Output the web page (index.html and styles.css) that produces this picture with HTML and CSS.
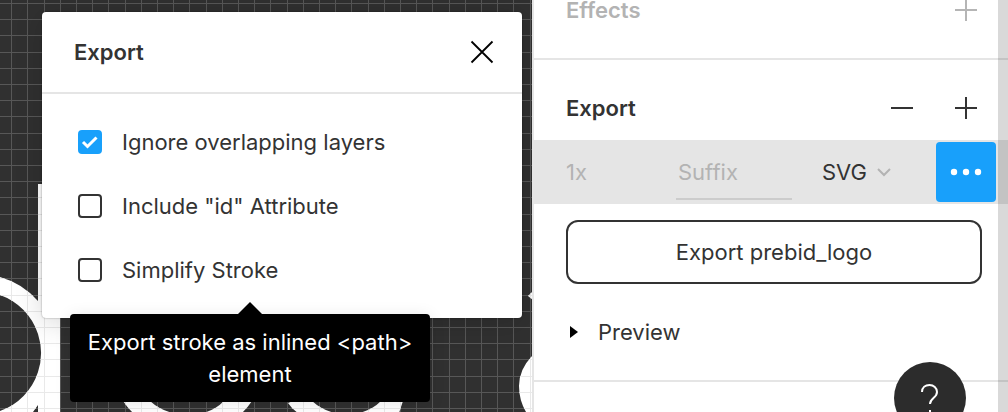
FILE: index.html
```html
<!DOCTYPE html>
<html lang="en">
<head>
<meta charset="utf-8">
<meta name="viewport" content="width=device-width, initial-scale=1">
<title>Export settings</title>
<link rel="stylesheet" href="styles.css">
</head>
<body>
<div class="editor">
  <main class="canvas">
    <svg class="artwork" aria-hidden="true">
      <defs>
        <pattern id="grid" x="11" y="3" width="81" height="81" patternUnits="userSpaceOnUse">
          <path d="M0 0h1v81h-1zM16 0h1v81h-1zM33 0h1v81h-1zM49 0h1v81h-1zM65 0h1v81h-1zM0 0h81v1h-81zM0 16h81v1h-81zM0 32h81v1h-81zM0 49h81v1h-81zM0 65h81v1h-81z" fill="#8c8c8c" fill-opacity=".42"/>
        </pattern>
        <pattern id="grid-light" x="11" y="3" width="81" height="81" patternUnits="userSpaceOnUse">
          <path d="M0 0h1v81h-1zM16 0h1v81h-1zM33 0h1v81h-1zM49 0h1v81h-1zM65 0h1v81h-1zM0 0h81v1h-81zM0 16h81v1h-81zM0 32h81v1h-81zM0 49h81v1h-81zM0 65h81v1h-81z" fill="#e9e9e9"/>
        </pattern>
        <g id="letters">
          <path d="M0 277A78.700 78.700 0 0 1 38 301V334A61.500 61.500 0 0 0 0 295zM0 411A61.500 61.500 0 0 0 38 372V405L33 412H0z"/>
          <path d="M38 184H60V412H38V372A61.500 61.500 0 0 0 38 334z"/>
          <path d="M123 401Q127 407 133 413H173Q160 410 150 401zM224 401Q215 410 203 413H242Q248 407 252 401z"/>
          <path d="M293 401L288 403Q292 409 298 413H335Q322 410 312 401zM381 401Q372 410 359 413H399L403 401z"/>
          <path d="M519 386Q519 369 533 355V412H526Q519 400 519 386zM528 296l5-5v9z"/>
        </g>
      </defs>
      <rect width="100%" height="100%" fill="url(#grid)"/>
      <use href="#letters" fill="#fff"/>
      <use href="#letters" fill="url(#grid-light)"/>
    </svg>
    <section class="dialog" aria-labelledby="dialog-title">
      <header class="dialog-header">
        <h2 id="dialog-title">Export</h2>
        <button class="icon-button" type="button" aria-label="Close">
          <svg width="24" height="24" viewBox="0 0 24 24"><path d="M1.500 1.500l21 21M22.500 1.500l-21 21" stroke="#000" stroke-width="1.800"/></svg>
        </button>
      </header>
      <div class="options">
        <label class="option"><input type="checkbox" checked><span>Ignore overlapping layers</span></label>
        <label class="option"><input type="checkbox"><span>Include "id" Attribute</span></label>
        <label class="option"><input type="checkbox" aria-describedby="stroke-tip"><span>Simplify Stroke</span></label>
      </div>
      <div class="tooltip" id="stroke-tip" role="tooltip">Export stroke as inlined &lt;path&gt; element</div>
    </section>
  </main>
  <aside class="panel">
    <section class="effects">
      <h2>Effects</h2>
      <button class="icon-button" type="button" aria-label="Add effect">
        <svg width="24" height="24" viewBox="0 0 24 24"><path d="M1 12h22M12 1v22" stroke="#b5b5b5" stroke-width="2"/></svg>
      </button>
    </section>
    <section class="export">
      <header class="export-header">
        <h2>Export</h2>
        <button class="icon-button" type="button" aria-label="Remove export">
          <svg width="24" height="24" viewBox="0 0 24 24"><path d="M1 12h22" stroke="#333" stroke-width="2"/></svg>
        </button>
        <button class="icon-button" type="button" aria-label="Add export">
          <svg width="24" height="24" viewBox="0 0 24 24"><path d="M1 12h22M12 1v22" stroke="#333" stroke-width="2"/></svg>
        </button>
      </header>
      <div class="export-row">
        <input class="scale" type="text" value="1x" aria-label="Scale">
        <input class="suffix" type="text" placeholder="Suffix" aria-label="Suffix">
        <div class="format">
          <select aria-label="Format"><option>SVG</option></select>
          <svg class="chevron" width="14" height="9" viewBox="0 0 14 9" aria-hidden="true"><path d="M1 1l6 6 6-6" fill="none" stroke="#b3b3b3" stroke-width="2"/></svg>
        </div>
        <button class="more" type="button" aria-label="Export settings">
          <svg width="32" height="8" viewBox="0 0 32 8"><g fill="#fff"><circle cx="4" cy="4" r="3.200"/><circle cx="16" cy="4" r="3.200"/><circle cx="28" cy="4" r="3.200"/></g></svg>
        </button>
      </div>
      <button class="export-button" type="button">Export prebid_logo</button>
      <button class="preview" type="button">
        <svg width="8" height="12" viewBox="0 0 8 12" aria-hidden="true"><path d="M0 0l8 6-8 6z"/></svg>
        <span>Preview</span>
      </button>
    </section>
    <div class="scrollbar"></div>
  </aside>
  <button class="help" type="button" aria-label="Help">
    <svg width="20" height="34" viewBox="0 0 20 34" fill="none" stroke="#fff" stroke-width="2"><path d="M2 10C2 5.500 5.400 3 9.500 3s7.500 2.700 7.500 7c0 6-7 6-7 12M10 28v3"/></svg>
  </button>
</div>
</body>
</html>
```
FILE: styles.css
```css
* { box-sizing: border-box; }
body {
  margin: 0;
  overflow: hidden;
  color: #333;
  font: 22px/32px Inter, "Liberation Sans", sans-serif;
}
h2 { margin: 0; font-size: 22px; font-weight: 600; line-height: 32px; }
button, input, select { margin: 0; padding: 0; border: 0; background: none; color: inherit; font: inherit; }
svg { display: block; }

.editor { position: relative; display: flex; height: 100vh; overflow: hidden; }
.canvas { position: relative; flex: 1; min-width: 0; padding: 12px 10px 0 42px; background: #303030; }
.artwork { position: absolute; inset: 0; width: 100%; height: 100%; }
.icon-button { display: grid; place-items: center; width: 24px; height: 32px; }

.dialog { position: relative; border-radius: 4px; background: #fff; box-shadow: 0 4px 28px rgba(0, 0, 0, .16), 0 0 2px rgba(0, 0, 0, .4); }
.dialog-header { display: flex; align-items: center; justify-content: space-between; padding: 24px 28px 24px 32px; border-bottom: 2px solid #e5e5e5; }
.options { display: flex; flex-direction: column; gap: 32px; padding: 32px 36px; }
.option { display: flex; align-items: center; gap: 20px; }
.option input { appearance: none; width: 24px; height: 24px; border: 2px solid #333; border-radius: 4px; }
.option input:checked { border-color: #18a0fb; background: #18a0fb url("data:image/svg+xml,%3Csvg xmlns='http://www.w3.org/2000/svg' viewBox='0 0 20 20'%3E%3Cpath d='M3 10l4.500 4.500 9-9' fill='none' stroke='white' stroke-width='3'/%3E%3C/svg%3E") center / 20px no-repeat; }
.tooltip { position: absolute; top: 302px; left: 28px; width: 360px; padding: 12px 14px; border-radius: 4px; background: #000; color: #fff; text-align: center; box-shadow: 0 2px 16px rgba(0, 0, 0, .1); }
.tooltip::before { content: ""; position: absolute; bottom: 100%; left: 50%; margin-left: -12px; border: solid transparent; border-width: 0 12px 12px; border-bottom-color: #000; }

.panel { position: relative; width: 476px; border-left: 2px solid #e5e5e5; background: #fff; }
.effects { display: flex; align-items: center; justify-content: space-between; height: 60px; padding: 0 30px 38px 32px; border-bottom: 2px solid #e5e5e5; color: #b3b3b3; }
.effects h2 { line-height: 20px; }
.export { padding-bottom: 32px; border-bottom: 2px solid #e5e5e5; }
.export-header { display: flex; align-items: center; gap: 40px; padding: 32px 30px 16px 32px; }
.export-header h2 { flex: 1; }
.export-row { display: flex; align-items: center; height: 64px; padding: 0 12px 0 32px; background: #e5e5e5; color: #b3b3b3; }
.scale { width: 110px; height: 32px; }
.suffix { width: 116px; height: 56px; padding: 2px 2px 0; border-bottom: 2px solid #ccc; }
.suffix::placeholder { color: #b3b3b3; opacity: 1; }
.format { display: flex; flex: 1; align-items: center; gap: 10px; padding-left: 30px; color: #333; }
.format select { appearance: none; }
.more { display: grid; place-items: center; width: 60px; height: 60px; border-radius: 4px; background: #18a0fb; }
.export-button { display: block; width: calc(100% - 58px); height: 64px; margin: 16px 26px 32px 32px; border: 2px solid #333; border-radius: 12px; }
.preview { display: flex; align-items: center; gap: 20px; margin-left: 36px; }
.scrollbar { position: absolute; inset: 0 0 0 auto; width: 10px; background: rgba(0, 0, 0, .15); }
.help { position: absolute; top: 362px; right: 42px; display: grid; place-items: start center; width: 72px; height: 72px; padding-top: 20px; border-radius: 50%; background: #2c2c2c; }
```
